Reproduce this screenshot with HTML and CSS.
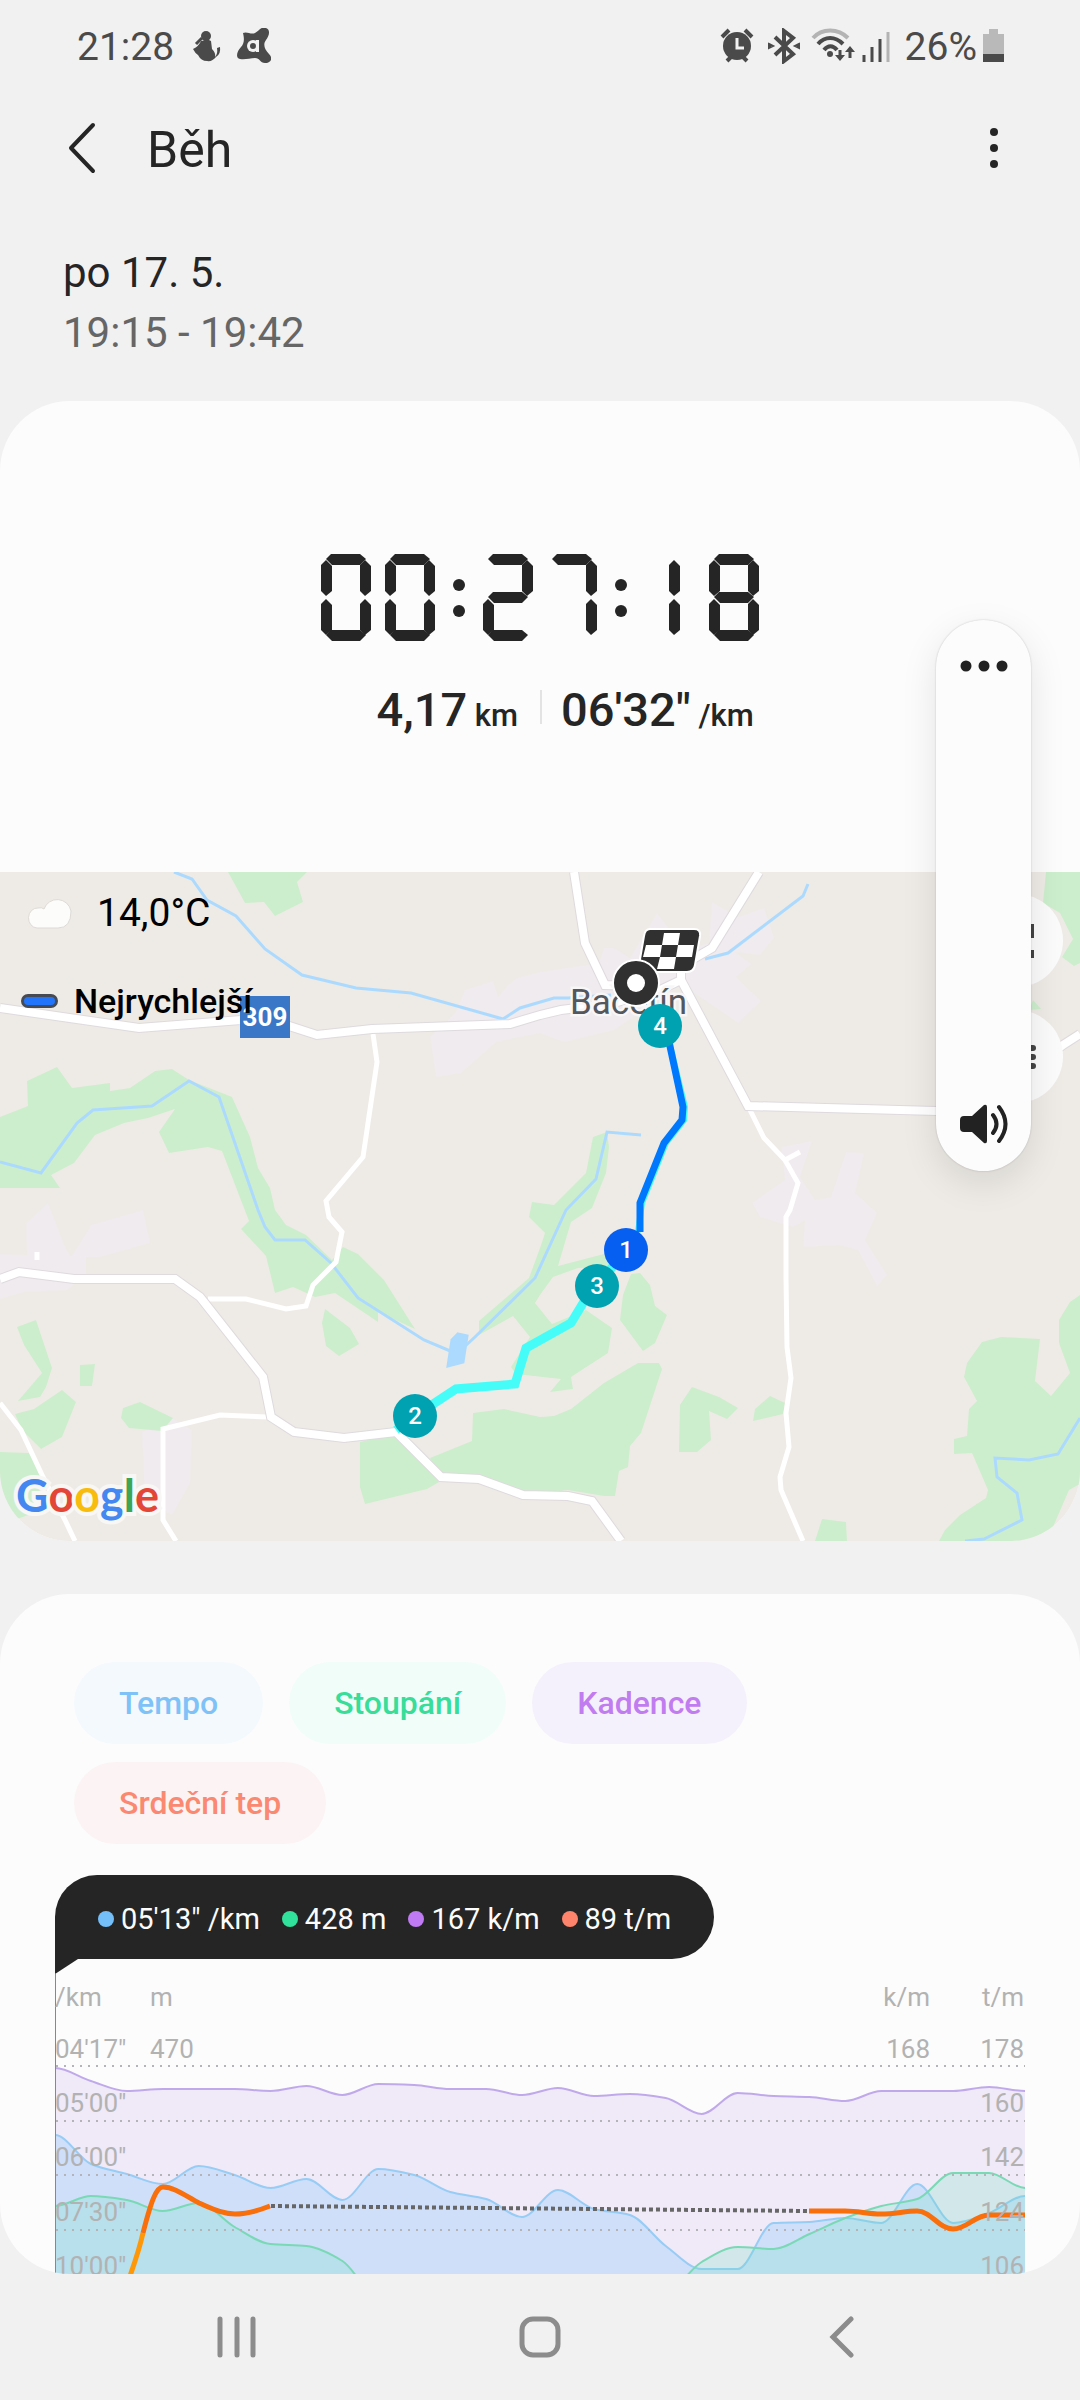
FILE: index.html
```html
<!DOCTYPE html>
<html lang="cs">
  <head>
    <meta charset="UTF-8">
    <meta name="viewport" content="width=device-width, initial-scale=1">
    <title>Běh</title>
    <link rel="stylesheet" href="styles.css">
  </head>
  <body>
    <div class="status">
      <span>21:28</span>
      <svg class="status-left" width="80" height="36" viewBox="0 0 80 36" fill="#4a4a4a">
        <circle cx="15" cy="8" r="5" />
        <path d="M11 13q5-3 9 0l1 8q4 4 3 8q3-3 2-9l3-1q1 7-4 10-4 5-9 4-6 0-9-6-3-2-5-6 6-3 8-8z" />
        <path d="M5 16l6-6" stroke="#4a4a4a" stroke-width="3" />
        <path d="M52 5c4-2 8 2 12 0s6-7 11-5 3 8 0 12-2 9 3 14 1 9-4 9-5-5-10-5-10 2-15 1-3-8 1-12 3-10 2-14z" />
        <circle cx="62" cy="18" r="6" fill="#f2f2f2" />
        <path d="M65 12h3v12h-3z" fill="#f2f2f2" />
        <circle cx="62" cy="18" r="3" />
      </svg>
      <svg class="status-right" width="171" height="36" viewBox="0 0 171 36" fill="none" stroke="#4a4a4a">
        <circle cx="17" cy="18" r="14" fill="#4a4a4a" stroke="none" />
        <path d="M2 9l7-7M32 9l-7-7M7 33l4-4M27 33l-4-4" stroke-width="4" />
        <path d="M17 10v10h7" stroke="#f2f2f2" stroke-width="3" />
        <path d="M55 9l18 17-9 7V3l9 7-18 17" stroke-width="4" />
        <path d="M49 16l4 2-4 2zM79 16l-4 2 4 2z" fill="#4a4a4a" stroke-width="2" />
        <path d="M93 10c9-10 25-10 35 0" stroke="#b3b3b3" stroke-width="4" />
        <path d="M98 16c7-8 17-8 25 0M104 22c4-5 9-5 13 0" stroke-width="4" />
        <circle cx="110" cy="26" r="3" fill="#4a4a4a" stroke="none" />
        <path d="M120 22v8M130 30v-8" stroke-width="3" />
        <path d="M115 27h10l-5 6zM125 24h10l-5-6z" fill="#4a4a4a" stroke="none" />
        <path d="M144 27v7M152 19v15M160 11v23" stroke-width="3" />
        <path d="M168 4v30" stroke="#b3b3b3" stroke-width="3" />
      </svg>
      <span>26%</span>
      <svg class="battery" width="21" height="34" viewBox="0 0 21 34">
        <path d="M6 0h9v5h6v28H0V5h6z" fill="#b9b9b9" />
        <path d="M0 25h21v8H0z" fill="#4a4a4a" />
      </svg>
    </div>

    <header class="toolbar">
      <button type="button" aria-label="Zpět">
        <svg width="30" height="52" viewBox="0 0 30 52"><path d="M26 3L4 26l22 23" fill="none" stroke="#252525" stroke-width="4" stroke-linecap="round" stroke-linejoin="round" /></svg>
      </button>
      <h1>Běh</h1>
      <button type="button" aria-label="Další možnosti">
        <svg width="10" height="42" viewBox="0 0 10 42" fill="#252525"><circle cx="5" cy="5" r="4" /><circle cx="5" cy="21" r="4" /><circle cx="5" cy="37" r="4" /></svg>
      </button>
    </header>

    <div class="date">
      <div>po 17. 5.</div>
      <div class="hours">19:15 - 19:42</div>
    </div>

    <section class="card">
      <div class="summary">
        <time datetime="PT27M18S">
          <span class="sr-only">00:27:18</span>
          <svg width="438" height="87" viewBox="0 0 438 87" fill="#252525" aria-hidden="true">
            <defs>
              <polygon id="h" points="5,0 34,0 40,5 34,11 6,11 0,5" />
              <polygon id="v" points="5,0 11,6 11,31 5,36 0,31 0,5" />
              <g id="right"><use href="#v" x="39" y="6" /><use href="#v" x="39" y="45" /></g>
              <g id="zero">
                <use href="#h" x="5" /><use href="#h" x="5" y="76" />
                <use href="#v" y="6" /><use href="#v" y="45" /><use href="#right" />
              </g>
              <g id="dots"><circle cx="6" cy="31" r="6" /><circle cx="6" cy="57" r="6" /></g>
            </defs>
            <use href="#zero" />
            <use href="#zero" x="64" />
            <use href="#dots" x="132" />
            <g transform="translate(162)">
              <use href="#h" x="5" /><use href="#h" x="5" y="38" /><use href="#h" x="5" y="76" />
              <use href="#v" x="39" y="6" /><use href="#v" y="45" />
            </g>
            <g transform="translate(226)"><use href="#h" x="5" /><use href="#right" /></g>
            <use href="#dots" x="294" />
            <use href="#right" x="309" />
            <g transform="translate(388)"><use href="#zero" /><use href="#h" x="5" y="38" /></g>
          </svg>
        </time>
        <div class="stats">
          <div class="distance">4,17<small> km</small></div>
          <div class="pace">06'32"<small> /km</small></div>
        </div>
      </div>

      <div class="map">
        <svg class="map-tiles" viewBox="0 872 1080 669">
          <defs>
            <g id="roads">
              <path d="M0 1008L139 1028 241 1020 289 1026 317 1035 372 1029 510 1024 540 1015 561 1010 610 1004 660 990 681 980" />
              <path d="M759 872L712 948 681 966 681 980 748 1106 936 1111 1000 1090 1063 1045 1080 1034" />
              <path d="M574 872L585 943 605 985 640 986" />
              <path d="M0 1279L19 1272 74 1279 175 1279 200 1297 263 1377 271 1417 294 1432 344 1438 396 1432 441 1477 479 1479 523 1495 568 1496 592 1501 621 1541" />
            </g>
          </defs>
          <g fill="#efebee">
            <path d="M465 990L493 981 498 997 508 985 517 978 540 972 599 963 604 948 614 948 630 958 657 913 685 950 709 943 712 902 738 917 764 908 774 938 760 955 735 952 751 964 736 977 761 1001 738 1023 705 1000 681 985 614 1030 564 1042 540 1033 496 1042 461 1073 436 1077 430 1037 455 1013z" />
            <path d="M781 1147L812 1141 800 1177 815 1200 831 1197 846 1152 864 1153 855 1193 877 1213 865 1240 887 1275 877 1286 858 1250 840 1245 803 1247 805 1220 793 1227 760 1217 752 1203 785 1180z" />
            <path d="M0 1254L27 1255 26 1223 48 1203 65 1247 71 1257 91 1225 143 1210 150 1243 100 1257 86 1257 86 1275 67 1290 24 1292 0 1299z" />
            <path d="M142 1432L172 1418 192 1430 190 1483 172 1515 145 1500z" />
          </g>
          <g fill="#cdeecd">
            <path d="M228 872L245 903 264 902 275 916 303 902 297 882 307 872z" />
            <path d="M0 1117L28 1106 27 1081 57 1067 72 1088 110 1083 110 1091 130 1088 155 1071 172 1069 189 1080 232 1097 250 1137 258 1168 270 1188 275 1210 286 1225 306 1235 332 1260 343 1247 358 1254 384 1280 415 1329 378 1312 378 1322 335 1293 315 1297 293 1287 275 1293 266 1256 241 1229 249 1221 222 1151 208 1147 169 1153 159 1132 175 1109 148 1118 124 1123 95 1135 74 1163 51 1175 60 1188 0 1188z" />
            <path d="M325 1309L350 1328 359 1344 339 1356 326 1346 322 1323z" />
            <path d="M17 1327L36 1320 52 1368 46 1387 40 1397 18 1401 42 1373 24 1345z" />
            <path d="M80 1365L95 1364 92 1386 80 1386z" />
            <path d="M15 1414L34 1409 62 1390 76 1402 62 1437 41 1449 22 1430z" />
            <path d="M123 1408L140 1402 173 1418 162 1431 129 1428 121 1418z" />
            <path d="M0 1452L29 1453 43 1477 34 1513 17 1519 0 1500z" />
            <path d="M360 1442L396 1433 439 1482 427 1489 365 1504 360 1487z" />
            <path d="M430 1458L472 1441 473 1413 504 1409 540 1417 554 1416 571 1409 604 1383 638 1363 659 1363 662 1369 641 1433 630 1446 628 1467 619 1471 615 1496 604 1496 568 1490 523 1495 479 1479 442 1477z" />
            <path d="M593 1137L607 1132 609 1147 606 1173 592 1208 571 1222 558 1266 604 1254 614 1267 578 1268 553 1277 540 1295 535 1303 552 1324 586 1310 612 1328 608 1353 571 1377 573 1389 550 1392 561 1379 516 1374 511 1367 530 1337 513 1316 479 1335 479 1321 529 1278 540 1248 545 1233 529 1217 532 1202 554 1205 586 1173z" />
            <path d="M631 1274L640 1273 650 1285 655 1306 667 1315 655 1343 643 1351 620 1320 623 1295z" />
            <path d="M692 1387L719 1397 738 1408 727 1419 709 1411 711 1440 697 1452 679 1452 680 1405z" />
            <path d="M770 1396L785 1403 783 1414 753 1421 755 1409z" />
            <path d="M822 1519L846 1522 847 1541 815 1541z" />
            <path d="M939 1541L945 1530 960 1515 986 1498 988 1490 972 1453 954 1454 954 1439 967 1436 969 1409 977 1401 964 1377 967 1363 982 1342 1001 1337 1040 1339 1035 1381 1051 1396 1070 1373 1059 1343 1059 1320 1070 1302 1080 1295 1080 1484 1069 1490 1053 1527 1053 1541z" />
            <path d="M1046 872H1080V963L1074 966 1062 957 1073 939 1060 913 1043 903z" />
            <path d="M1033 1000L1041 1009 1029 1010z" />
          </g>
          <g class="water">
            <path d="M174 872L192 879 207 900 236 916 265 949 302 975 356 988 411 993 503 1019 520 1008 554 998 568 998 611 995" />
            <path d="M0 1162L41 1173 77 1123 93 1110 152 1106 189 1081 219 1097 258 1210 265 1227 275 1240 305 1240 331 1263 358 1298 424 1340 455 1353" />
            <path d="M463 1348L475 1337 535 1278 566 1210 596 1179 607 1132 641 1135" />
            <path d="M808 884L803 896 728 953 705 959" />
            <path d="M1080 1418L1058 1454 1029 1460 995 1458 997 1477 1017 1493 1022 1520 984 1539 965 1541" />
            <path d="M458 1334L467 1336 463 1362 448 1366 452 1340z" fill="#acdafe" />
          </g>
          <g class="lane">
            <path d="M373 1034L377 1062 363 1157 326 1201 329 1217 342 1232 336 1262 313 1285 306 1306 286 1309 246 1299 208 1299" />
            <path d="M267 1417L220 1415 163 1429 163 1520 176 1541" />
            <path d="M0 1403L21 1430 43 1477 65 1520 75 1541" />
            <path d="M748 1106L764 1138 785 1160 798 1183 790 1210 786 1217 786 1277 787 1347 791 1378 786 1413 789 1447 780 1477 781 1490 803 1541" />
            <path d="M785 1160L800 1152M37 1252V1260" />
          </g>
          <use href="#roads" class="road-edge" />
          <use href="#roads" class="road" />
          <rect x="240" y="996" width="50" height="42" fill="#3a77c6" />
          <text class="shield" x="265" y="1026">309</text>
          <text class="town" x="570" y="1014">Bačetín</text>

          <path d="M396 1430L415 1416 456 1389 515 1384 526 1348 571 1323 585 1300 597 1286 626 1250" class="route" />
          <path d="M638 1232L642 1203 666 1143 684 1120 685 1107 668 1037" class="route route-thin" />
          <path d="M640 1232L640 1203 664 1143 682 1120 683 1107 668 1037" class="route route-fast" />

          <g stroke="#fff" stroke-width="2">
            <path d="M650 929h44q7 0 6 7l-5 29q-1 7-8 7h-42q-7 0-6-7l5-29q1-7 6-7z" fill="#303030" />
            <circle cx="636" cy="983" r="23" fill="#303030" />
          </g>
          <g fill="#fff">
            <path d="M664 933h16l-2 12h-16zM646 945h16l-2 12h-17zM678 945h16l-2 12h-16zM660 957h16l-2 12h-17z" />
            <circle cx="636" cy="983" r="9" />
          </g>
          <g class="laps">
            <g fill="#00a2b1">
              <circle cx="660" cy="1026" r="22" />
              <circle cx="597" cy="1286" r="22" />
              <circle cx="415" cy="1416" r="22" />
            </g>
            <circle cx="626" cy="1250" r="22" fill="#065ff0" />
            <text x="660" y="1034">4</text>
            <text x="597" y="1294">3</text>
            <text x="415" y="1424">2</text>
            <text x="626" y="1258">1</text>
          </g>
        </svg>

        <div class="map-info">
          <div class="weather">
            <svg width="46" height="34" viewBox="0 0 46 34"><path d="M10 32a9 10 0 0 1 1-20q4-1 6 1A14 14 0 0 1 44 15q0 17-13 17z" fill="#fcfcfb" stroke="#dedbd6" /></svg>
            <span>14,0°C</span>
          </div>
          <div class="fastest"><i></i><span>Nejrychlejší</span></div>
        </div>
        <div class="google" aria-label="Google"><span class="b">G</span><span class="r">o</span><span class="y">o</span><span class="b">g</span><span class="g">l</span><span class="r">e</span></div>
        <div class="map-buttons">
          <button type="button" aria-label="Celá obrazovka">
            <svg width="36" height="36" viewBox="0 0 36 36"><path d="M3 15V3h12M21 3h12v12M33 27v6H21M15 33H3V21" fill="none" stroke="#444" stroke-width="4" /></svg>
          </button>
          <button type="button" aria-label="Vrstvy">
            <svg width="38" height="24" viewBox="0 0 38 24"><path d="M3 3h32M3 12h32M3 21h32" stroke="#444" stroke-width="6" stroke-linecap="round" /></svg>
          </button>
        </div>
      </div>
    </section>

    <section class="card details">
      <div class="chips">
        <button type="button" class="chip tempo">Tempo</button>
        <button type="button" class="chip climb">Stoupání</button>
        <button type="button" class="chip cadence">Kadence</button>
        <button type="button" class="chip heart">Srdeční tep</button>
      </div>
      <div class="bubble">
        <span class="tempo">05'13" /km</span>
        <span class="climb">428 m</span>
        <span class="cadence">167 k/m</span>
        <span class="heart">89 t/m</span>
      </div>
      <svg class="chart" viewBox="0 0 970 315">
        <path d="M0 0H23L0 15z" fill="#252525" />
        <g transform="translate(0 15)">
          <path id="cadence" fill="#efe9f8" stroke="#c0a9ea" />
          <path id="tempo" fill="rgba(132, 203, 255, 0.3)" stroke="#97ccf5" />
          <path id="climb" fill="rgba(94, 223, 178, 0.2)" stroke="#7ad9b5" />
          <path class="grid" d="M1 92H970M1 147H970M1 201H970M1 256H970" />
          <path d="M216 232L754 237" stroke="#666" stroke-width="4" stroke-dasharray="4 3" />
          <g fill="none" stroke-width="5">
            <path d="M75 302C82 282 86 268 88 259" stroke="#ff9808" />
            <path d="M88 259C96 228 101 213 108 213C120 213 132 223 144 229C158 235 168 240 180 240C192 240 205 236 215 232" stroke="#f96f0b" />
            <path d="M754 237H790C804 237 812 240 826 240S850 237 862 237C876 237 884 255 898 255S920 241 934 241H970" stroke="#f96f0b" />
          </g>
          <path d="M0 0V300" stroke="#888" stroke-width="2" />
          <g class="axis">
            <text x="0" y="32">/km</text>
            <text x="0" y="84">04'17"</text>
            <text x="0" y="138">05'00"</text>
            <text x="0" y="192">06'00"</text>
            <text x="0" y="247">07'30"</text>
            <text x="0" y="301">10'00"</text>
            <text x="95" y="32">m</text>
            <text x="95" y="84">470</text>
          </g>
          <g class="axis end">
            <text x="875" y="32">k/m</text>
            <text x="875" y="84">168</text>
            <text x="969" y="32">t/m</text>
            <text x="969" y="84">178</text>
            <text x="969" y="138">160</text>
            <text x="969" y="192">142</text>
            <text x="969" y="247">124</text>
            <text x="969" y="301">106</text>
          </g>
        </g>
      </svg>
    </section>

    <nav class="navbar">
      <button type="button" aria-label="Poslední aplikace">
        <svg width="42" height="42" viewBox="0 0 42 42"><path d="M4 3v36M21 3v36M37 3v36" stroke="#8c8c8c" stroke-width="5" stroke-linecap="round" /></svg>
      </button>
      <button type="button" aria-label="Domů">
        <svg width="42" height="42" viewBox="0 0 42 42"><rect x="3" y="3" width="36" height="36" rx="11" fill="none" stroke="#8c8c8c" stroke-width="5" /></svg>
      </button>
      <button type="button" aria-label="Zpět">
        <svg width="42" height="42" viewBox="0 0 42 42"><path d="M29 3L11 21l18 18" fill="none" stroke="#8c8c8c" stroke-width="5" stroke-linecap="round" /></svg>
      </button>
    </nav>

    <div class="volume">
      <button type="button" aria-label="Nastavení zvuku">
        <svg width="48" height="12" viewBox="0 0 48 12" fill="#222"><circle cx="6" cy="6" r="5.500" /><circle cx="24" cy="6" r="5.500" /><circle cx="42" cy="6" r="5.500" /></svg>
      </button>
      <button type="button" aria-label="Ztlumit">
        <svg width="48" height="40" viewBox="0 0 48 40">
          <path d="M4 12h8L24 1q3-1 3 2v34q0 3-3 2L12 28H4q-4 0-4-4v-8q0-4 4-4z" fill="#222" />
          <path d="M33 11q7 9 0 18M39 3q13 17 0 34" fill="none" stroke="#222" stroke-width="4" stroke-linecap="round" />
        </svg>
      </button>
    </div>

    <script src="script.js"></script>
  </body>
</html>
```
FILE: styles.css
```css
* {
  box-sizing: border-box;
}

body {
  position: relative;
  margin: 0;
  background: #f1f1f1;
  color: #252525;
  font-family: Roboto, "Liberation Sans", sans-serif;
}

svg {
  display: block;
}

button {
  display: flex;
  align-items: center;
  justify-content: center;
  padding: 0;
  border: none;
  background: none;
  font-family: inherit;
}

.sr-only {
  position: absolute;
  width: 1px;
  height: 1px;
  overflow: hidden;
  clip-path: inset(50%);
}

.status {
  display: flex;
  align-items: center;
  height: 92px;
  padding: 0 76px 0 77px;
  color: #4a4a4a;
  font-size: 39px;
}

.status span {
  padding-top: 2px;
}

.status-left {
  margin-left: 17px;
}

.status-right {
  margin-left: auto;
  margin-right: 14px;
}

.battery {
  margin-left: 6px;
}

.toolbar {
  display: flex;
  align-items: center;
  height: 112px;
  padding: 0 81px 0 67px;
}

.toolbar h1 {
  flex: 1;
  margin: 0 0 0 50px;
  padding-top: 3px;
  font-size: 50px;
  font-weight: 400;
}

.date {
  padding: 39px 63px 0;
  font-size: 42px;
  line-height: 60px;
  height: 197px;
}

.hours {
  color: #666;
}

.card {
  overflow: hidden;
  border-radius: 70px;
  background: #fcfcfc;
}

.summary {
  padding: 153px 0 134px;
}

.summary svg {
  margin: 0 auto;
}

.stats {
  display: grid;
  grid-template-columns: 1fr 1fr;
  height: 56px;
  margin-top: 41px;
  font-size: 47px;
  font-weight: 500;
  line-height: 56px;
}

.stats small {
  font-size: 31px;
}

.distance {
  padding-right: 22px;
  text-align: right;
}

.pace {
  padding-left: 21px;
  background: linear-gradient(#e3e3e3, #e3e3e3) no-repeat 0 8px / 2px 34px;
}

.map {
  position: relative;
  background: #eeebe6;
}

.map-tiles {
  width: 100%;
}

.water {
  fill: none;
  stroke: #acdafe;
  stroke-width: 3px;
}

.lane {
  fill: none;
  stroke: #fff;
  stroke-width: 5px;
}

.road-edge {
  fill: none;
  stroke: #dedade;
  stroke-width: 10px;
}

.road {
  fill: none;
  stroke: #fff;
  stroke-width: 8px;
}

.shield {
  fill: #fff;
  font-size: 26px;
  font-weight: 700;
  text-anchor: middle;
}

.town {
  fill: #53585f;
  stroke: #f8f6f6;
  stroke-width: 5px;
  paint-order: stroke;
  font-size: 35px;
}

.route {
  fill: none;
  stroke: #46fcf8;
  stroke-width: 9px;
}

.route-thin {
  stroke-width: 6px;
}

.route-fast {
  stroke: #0078fd;
  stroke-width: 7px;
}

.laps text {
  fill: #fff;
  font-size: 24px;
  font-weight: 500;
  text-anchor: middle;
}

.map-info {
  position: absolute;
  top: 18px;
  left: 21px;
  color: #000;
}

.weather,
.fastest {
  display: flex;
  align-items: center;
}

.weather {
  gap: 24px;
  padding-left: 6px;
  font-size: 39px;
  line-height: 46px;
}

.fastest {
  gap: 16px;
  margin-top: 45px;
  font-size: 34px;
  font-weight: 500;
  line-height: 40px;
}

.fastest i {
  width: 37px;
  height: 14px;
  border: 3px solid #454a55;
  border-radius: 7px;
  background: #2274fb;
}

.google {
  position: absolute;
  left: 16px;
  bottom: 18px;
  font-family: Lato, sans-serif;
  font-size: 45px;
  font-weight: 700;
  line-height: 56px;
  -webkit-text-stroke: 8px #f8f7f5;
  paint-order: stroke;
}

.google .b { color: #4587f0; }
.google .r { color: #e34637; }
.google .y { color: #f8bc0e; }
.google .g { color: #3ba657; }

.map-buttons {
  position: absolute;
  top: 22px;
  right: 17px;
  display: flex;
  flex-direction: column;
  gap: 23px;
}

.map-buttons button {
  width: 93px;
  height: 93px;
  border-radius: 50%;
  background: #fbfbfb;
}

.details {
  margin-top: 53px;
  padding: 68px 55px 0;
}

.chips {
  display: flex;
  flex-wrap: wrap;
  gap: 18px 26px;
  padding: 0 160px 0 19px;
}

.chip {
  height: 82px;
  padding: 0 45px;
  border-radius: 41px;
  font-size: 32px;
  font-weight: 500;
}

.chip.tempo { color: #7fc2f8; background: #f4f9fd; }
.chip.climb { color: #38dd9a; background: #f1fdf8; }
.chip.cadence { color: #c17df0; background: #f5f1fc; }
.chip.heart { color: #fb8870; background: #fcf4f4; }

.bubble {
  display: flex;
  align-items: center;
  gap: 22px;
  width: fit-content;
  height: 84px;
  margin-top: 31px;
  padding: 3px 43px 0;
  border-radius: 42px 42px 42px 0;
  background: #252525;
  color: #fcfcfc;
  font-size: 29px;
}

.bubble span {
  display: flex;
  align-items: center;
  gap: 7px;
}

.bubble span::before {
  content: "";
  width: 16px;
  height: 16px;
  border-radius: 50%;
}

.bubble .tempo::before { background: #74bffa; }
.bubble .climb::before { background: #30e29b; }
.bubble .cadence::before { background: #c07af3; }
.bubble .heart::before { background: #fe846c; }

.chart {
  width: 100%;
}

#cadence,
#tempo,
#climb {
  stroke-width: 2px;
}

.grid {
  stroke: #b4b4b8;
  stroke-width: 2px;
  stroke-dasharray: 2 6;
}

.axis {
  fill: #b2b2b2;
  font-size: 26px;
}

.end {
  text-anchor: end;
}

.navbar {
  display: flex;
  height: 126px;
  padding: 0 86px;
}

.navbar button {
  flex: 1;
}

.volume {
  position: absolute;
  top: 620px;
  right: 49px;
  display: flex;
  flex-direction: column;
  justify-content: space-between;
  align-items: center;
  width: 95px;
  height: 551px;
  padding: 40px 0 27px;
  border-radius: 48px;
  background: #fcfcfc;
  box-shadow: 0 0 2px rgba(0, 0, 0, 0.2), 0 12px 36px rgba(0, 0, 0, 0.1);
}
```
FILE: script.js
```js
// one value for each minute, in chart units
const series = {
  cadence: [94, 107, 117, 115, 115, 115, 117, 112, 121, 110, 111, 115, 115, 121, 114, 122, 120, 124, 140, 119, 122, 123, 127, 117, 117, 117, 113, 117],
  tempo: [161, 190, 200, 210, 192, 201, 214, 205, 226, 195, 201, 218, 225, 243, 216, 235, 241, 272, 295, 295, 249, 248, 244, 249, 210, 249, 239, 222],
  climb: [232, 222, 226, 237, 229, 253, 270, 272, 287, 330, 350, 350, 350, 350, 350, 350, 350, 325, 288, 273, 275, 260, 244, 232, 225, 199, 199, 214]
};

const width = 970;
const bottom = 400;

function slope(values, i) {
  const before = values[i] - values[i - 1];
  const after = values[i + 1] - values[i];
  // flat on every peak and valley, and at both ends
  if (!(before * after > 0)) return 0;
  return (2 * before * after) / (before + after);
}

function area(values) {
  const step = width / (values.length - 1);
  let d = "M-5 " + values[0] + "L0 " + values[0];

  for (let i = 1; i < values.length; i++) {
    const x = i * step;
    const c1 = values[i - 1] + slope(values, i - 1) / 3;
    const c2 = values[i] - slope(values, i) / 3;
    d += "C" + [x - (step * 2) / 3, c1, x - step / 3, c2, x, values[i]].join(" ");
  }

  return d + "h5V" + bottom + "H-5Z";
}

Object.keys(series).forEach(id => {
  document.getElementById(id).setAttribute("d", area(series[id]));
});
```
